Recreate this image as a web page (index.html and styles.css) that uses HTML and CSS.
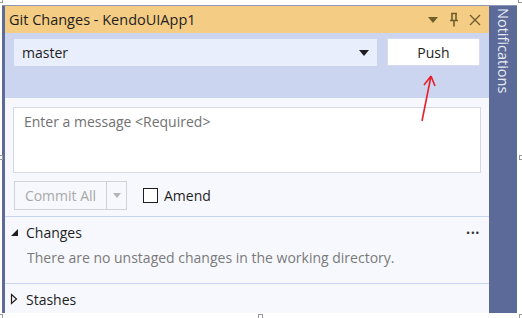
FILE: index.html
```html
<!DOCTYPE html>
<html lang="en">
<head>
  <meta charset="UTF-8">
  <title>Git Changes</title>
  <link rel="stylesheet" href="styles.css">
</head>
<body>
  <div class="window">
    <div class="pane">
      <div class="titlebar">
        <span class="title">Git Changes - KendoUIApp1</span>
        <div class="title-icons">
          <svg width="12" height="8" viewBox="0 0 12 8"><path d="M1 1h10L6 7z" fill="#6e5f2c"/></svg>
          <svg width="12" height="16" viewBox="0 0 12 16"><path d="M3 1.5h6M4 1.5v7M8 1.5v7M2 8.5h8M6 8.5v6" stroke="#6e5f2c" stroke-width="1.6" fill="none"/></svg>
          <svg width="12" height="12" viewBox="0 0 12 12"><path d="M1 1l10 10M11 1L1 11" stroke="#6e5f2c" stroke-width="1.4"/></svg>
        </div>
      </div>
      <div class="toolbar">
        <div class="branch">
          <span>master</span>
          <svg width="10" height="6" viewBox="0 0 10 6"><path d="M0 0h10L5 6z" fill="#1e1e1e"/></svg>
        </div>
        <button class="push">Push</button>
      </div>
      <div class="content">
        <div class="message">Enter a message &lt;Required&gt;</div>
        <div class="commit-row">
          <div class="commit">
            <span class="commit-label">Commit All</span>
            <span class="commit-arrow"><svg width="8" height="5" viewBox="0 0 8 5"><path d="M0 0h8L4 5z" fill="#b5b5b5"/></svg></span>
          </div>
          <label class="amend"><span class="box"></span>Amend</label>
        </div>
        <div class="section">
          <div class="section-head">
            <svg class="caret" width="9" height="9" viewBox="0 0 9 9"><path d="M8 1v7H1z" fill="#1e1e1e"/></svg>
            <span class="section-title">Changes</span>
            <span class="more">&bull;&bull;&bull;</span>
          </div>
          <p class="empty">There are no unstaged changes in the working directory.</p>
        </div>
        <div class="section">
          <div class="section-head">
            <svg class="caret" width="9" height="12" viewBox="0 0 9 12"><path d="M1.5 1.5l5 4.5-5 4.5z" fill="none" stroke="#1e1e1e" stroke-width="1.2"/></svg>
            <span class="section-title">Stashes</span>
          </div>
        </div>
      </div>
    </div>
    <div class="side">
      <span class="side-label">Notifications</span>
    </div>
  </div>

  <svg class="arrow" width="522" height="318" viewBox="0 0 522 318">
    <path d="M422 121L431 76M431 76L424 85M431 76L435 86" stroke="#e8202a" stroke-width="1.6" fill="none"/>
  </svg>

  <span class="handle h-tl"></span>
  <span class="handle h-tr"></span>
  <span class="handle h-ml"></span>
  <span class="handle h-mr"></span>
  <span class="handle h-bl"></span>
  <span class="handle h-bm"></span>
  <span class="handle h-br"></span>
</body>
</html>
```

FILE: styles.css
```css
body {
  margin: 0;
  width: 522px;
  height: 318px;
  background: #fff;
  font-family: 'Open Sans', 'Noto Sans', sans-serif;
  color: #1e1e1e;
  position: relative;
  overflow: hidden;
}
.window {
  margin: 5px 5px 0 2px;
  height: 307px;
  display: flex;
  border-top: 1px solid #8e96b3;
}
.pane {
  flex: 1;
  display: flex;
  flex-direction: column;
  border-left: 3px solid #5d6b99;
  background: #f7f8fd;
  overflow: hidden;
}
.titlebar {
  flex-shrink: 0;
  height: 27px;
  background: #f5cc84;
  display: flex;
  align-items: center;
  justify-content: space-between;
  padding: 0 8px 0 4px;
}
.title {
  font-size: 14.5px;
}
.title-icons {
  display: flex;
  align-items: center;
  gap: 9px;
}
.toolbar {
  flex-shrink: 0;
  height: 65px;
  box-sizing: border-box;
  background: #ccd5f0;
  display: flex;
  align-items: flex-start;
  gap: 10px;
  padding: 6px 9px 0 9px;
}
.branch {
  flex: 1;
  height: 27px;
  background: #e8eefc;
  display: flex;
  align-items: center;
  justify-content: space-between;
  padding: 0 8px 0 8px;
  font-size: 14px;
}
.push {
  width: 93px;
  height: 28px;
  margin-top: -1px;
  background: #fff;
  border: 1px solid #d7dcea;
  font-family: inherit;
  font-size: 14px;
  color: #1e1e1e;
  padding: 0;
}
.content {
  flex: 1;
  padding: 9px 8px 0 8px;
}
.message {
  height: 66px;
  box-sizing: border-box;
  background: #fff;
  border: 1px solid #d6d9e4;
  padding: 4px 10px;
  font-size: 14px;
  color: #717171;
}
.commit-row {
  display: flex;
  align-items: center;
  gap: 16px;
  margin-top: 8px;
  padding-left: 1px;
  height: 29px;
}
.commit {
  display: flex;
  height: 29px;
  border: 1px solid #cfd2da;
  box-sizing: border-box;
  font-size: 14px;
  color: #a8a8a8;
}
.commit-label {
  width: 91px;
  display: flex;
  align-items: center;
  justify-content: center;
  border-right: 1px solid #cfd2da;
}
.commit-arrow {
  width: 19px;
  display: flex;
  align-items: center;
  justify-content: center;
}
.amend {
  display: flex;
  align-items: center;
  gap: 6px;
  font-size: 14px;
}
.box {
  width: 13px;
  height: 13px;
  border: 1px solid #1e1e1e;
  background: #fff;
}
.section {
  border-top: 1px solid #c9d5f0;
  margin: 0 -8px;
  padding: 0 8px 0 5px;
}
.commit-row + .section {
  margin-top: 6px;
}
.section-head {
  display: flex;
  align-items: center;
  height: 30px;
  font-size: 14px;
}
.caret {
  margin-right: 7px;
}
.section-title {
  flex: 1;
}
.more {
  font-size: 11px;
  letter-spacing: 0.5px;
  margin-right: 1px;
  color: #333;
}
.empty {
  margin: 0 0 14px 17px;
  font-size: 14px;
  color: #7a7a7a;
  line-height: 22px;
}
.side {
  width: 28px;
  background: #5b6a98;
  display: flex;
  justify-content: center;
  padding-top: 2px;
}
.side-label {
  writing-mode: vertical-rl;
  font-size: 14.5px;
  color: #e8ebf5;
}
.arrow {
  position: absolute;
  left: 0;
  top: 0;
  pointer-events: none;
}
.handle {
  position: absolute;
  width: 5px;
  height: 5px;
  box-sizing: border-box;
  border: 1px solid #9a9a9a;
  background: #fff;
}
.h-tl { left: -2px; top: -2px; }
.h-tr { left: 518px; top: -2px; }
.h-ml { left: -2px; top: 155px; }
.h-mr { left: 519px; top: 155px; }
.h-bl { left: -2px; top: 314px; }
.h-bm { left: 258px; top: 314px; }
.h-br { left: 519px; top: 314px; }
```
